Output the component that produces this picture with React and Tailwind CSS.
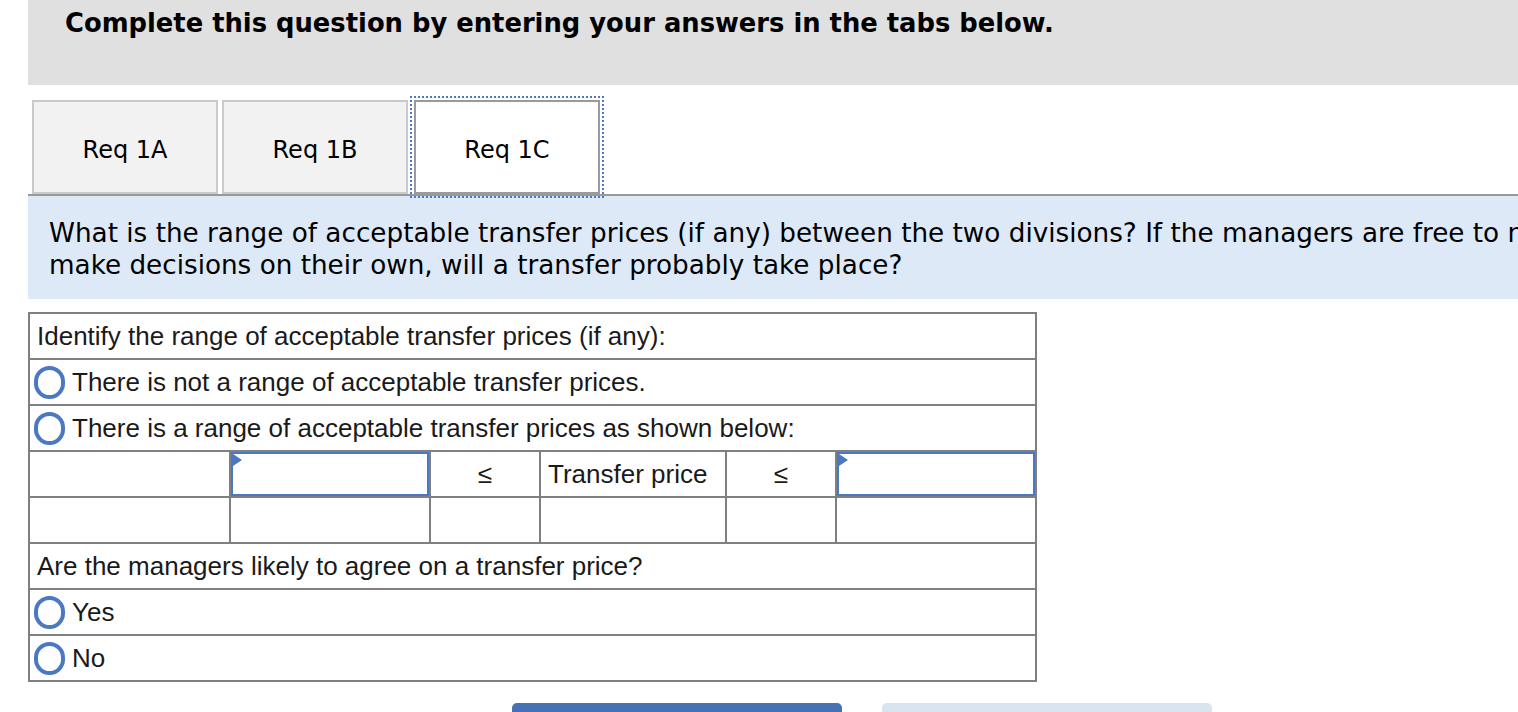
import React from 'react';

const verdana = { fontFamily: '"DejaVu Sans", Verdana, sans-serif' };
const arial = { fontFamily: '"Liberation Sans", Arial, sans-serif' };

function Radio() {
  return <span className="inline-block w-[31px] h-[33px] rounded-full border-[4px] border-[#4a78c2] bg-white shrink-0" />;
}

function InputCell() {
  return (
    <td className="border-2 border-[#808080] p-0 h-[46px]">
      <div className="relative h-[44px] border-2 border-[#4a78c2] bg-white">
        <span className="absolute left-0 top-0 w-0 h-0 border-y-[6px] border-y-transparent border-l-[9px] border-l-[#4a78c2]" />
      </div>
    </td>
  );
}

function Tab({ label, active }) {
  return (
    <div
      className={
        'w-[186px] h-[94px] pt-[6px] flex items-center justify-center text-[24px] text-black border-2 ' +
        (active
          ? 'bg-white border-[#9a9a9a] outline-2 outline-dotted outline-[#4a78c2] outline-offset-[2px]'
          : 'bg-[#f2f2f2] border-[#cacaca]')
      }
      style={verdana}
    >
      {label}
    </div>
  );
}

function RadioRow({ label }) {
  return (
    <tr className="h-[46px]">
      <td colSpan={6} className="border-2 border-[#808080] pl-[4px] py-0">
        <div className="flex items-center gap-[7px]">
          <Radio />
          <span>{label}</span>
        </div>
      </td>
    </tr>
  );
}

export default function App() {
  return (
    <div className="w-[1518px] h-[712px] overflow-hidden bg-white relative">
      <div className="ml-[28px] w-[1490px]">
        <div className="h-[85px] bg-[#e0e0e0] pl-[37px] pt-[7px]">
          <h1 className="text-[25.8px] font-bold text-black leading-[32px] whitespace-nowrap" style={verdana}>
            Complete this question by entering your answers in the tabs below.
          </h1>
        </div>

        <div className="mt-[15px] pl-[4px] flex gap-[4px]">
          <Tab label="Req 1A" />
          <Tab label="Req 1B" />
          <div className="ml-[2px]">
            <Tab label="Req 1C" active />
          </div>
        </div>
        <div className="h-[2px] bg-[#999999]" />

        <div className="bg-[#dde9f7] h-[103px] pl-[21px] pt-[21px] overflow-hidden">
          <p className="text-[26.25px] leading-[32px] text-black whitespace-nowrap" style={verdana}>
            What is the range of acceptable transfer prices (if any) between the two divisions? If the managers are free to negotiate and
            <br />
            make decisions on their own, will a transfer probably take place?
          </p>
        </div>

        <table className="mt-[13px] w-[1007px] border-collapse border-2 border-[#808080] text-[26px] text-[#1a1a1a] table-fixed" style={arial}>
          <colgroup>
            <col className="w-[201px]" />
            <col className="w-[200px]" />
            <col className="w-[110px]" />
            <col className="w-[186px]" />
            <col className="w-[110px]" />
            <col className="w-[200px]" />
          </colgroup>
          <tbody>
            <tr className="h-[46px]">
              <td colSpan={6} className="border-2 border-[#808080] px-[7px] py-0">
                Identify the range of acceptable transfer prices (if any):
              </td>
            </tr>
            <RadioRow label="There is not a range of acceptable transfer prices." />
            <RadioRow label="There is a range of acceptable transfer prices as shown below:" />
            <tr className="h-[46px]">
              <td className="border-2 border-[#808080]" />
              <InputCell />
              <td className="border-2 border-[#808080] text-center">≤</td>
              <td className="border-2 border-[#808080] px-[7px]">Transfer price</td>
              <td className="border-2 border-[#808080] text-center">≤</td>
              <InputCell />
            </tr>
            <tr className="h-[46px]">
              <td className="border-2 border-[#808080]" />
              <td className="border-2 border-[#808080]" />
              <td className="border-2 border-[#808080]" />
              <td className="border-2 border-[#808080]" />
              <td className="border-2 border-[#808080]" />
              <td className="border-2 border-[#808080]" />
            </tr>
            <tr className="h-[46px]">
              <td colSpan={6} className="border-2 border-[#808080] px-[7px] py-0">
                Are the managers likely to agree on a transfer price?
              </td>
            </tr>
            <RadioRow label="Yes" />
            <RadioRow label="No" />
          </tbody>
        </table>

        <div className="mt-[21px] flex gap-[40px] pl-[484px]">
          <button className="w-[330px] h-[40px] rounded-t-[5px] bg-[#4472b4]" />
          <button className="w-[330px] h-[40px] rounded-t-[5px] bg-[#dae4f0]" />
        </div>
      </div>
    </div>
  );
}
